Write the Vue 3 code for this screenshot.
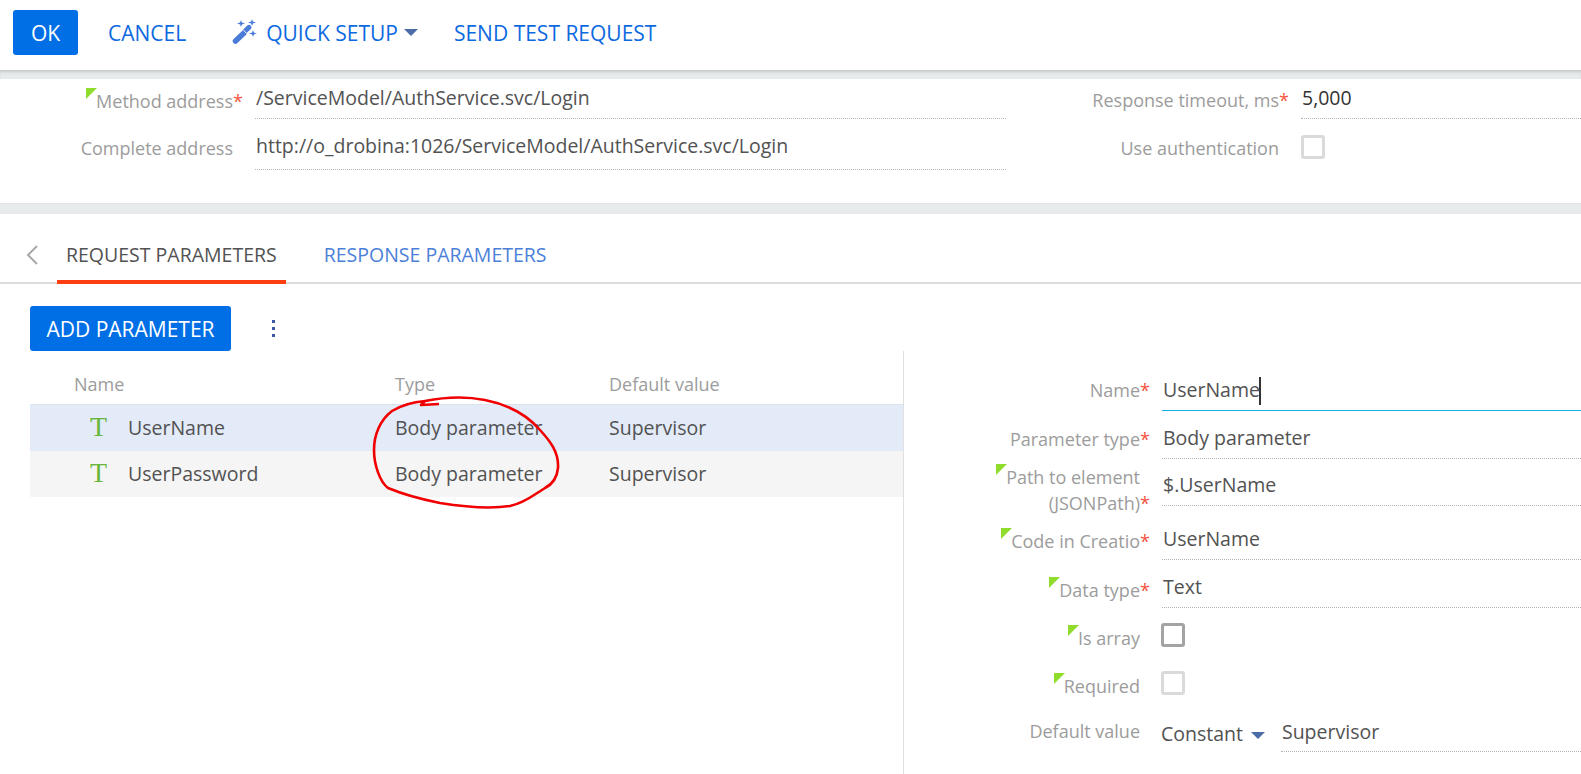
<script setup>
const topLeft = [
  { label: 'Method address', req: true, mark: true, value: '/ServiceModel/AuthService.svc/Login', cls: 'first' },
  { label: 'Complete address', value: 'http://o_drobina:1026/ServiceModel/AuthService.svc/Login', cls: 'second' }
]
const rows = [
  { name: 'UserName', type: 'Body parameter', def: 'Supervisor', active: true },
  { name: 'UserPassword', type: 'Body parameter', def: 'Supervisor' }
]
</script>

<template>
  <div class="page">
    <header class="toolbar">
      <button class="btn ok">OK</button>
      <span class="link cancel">CANCEL</span>
      <svg class="wand" width="26" height="26" viewBox="0 0 26 26">
        <path d="M3.5 22 L12 14" stroke="#4a7bd8" stroke-width="5.5" stroke-linecap="round" fill="none" />
        <path d="M13.4 11.8 L17 8.4" stroke="#4a7bd8" stroke-width="5" stroke-linecap="round" fill="none" />
        <path d="M11.6 11.2 L14.8 14.6" stroke="#fff" stroke-width="1" />
        <path d="M9 1 L9.9 3.6 L13 4.5 L9.9 5.4 L9 8 L8.1 5.4 L5 4.5 L8.1 3.6Z M20 0 L20.9 2.6 L24 3.5 L20.9 4.4 L20 7 L19.1 4.4 L16 3.5 L19.1 2.6Z M21 11 L21.9 13.6 L25 14.5 L21.9 15.4 L21 18 L20.1 15.4 L17 14.5 L20.1 13.6Z" fill="#4a7bd8" />
      </svg>
      <span class="link quick">QUICK SETUP</span>
      <span class="caret top-caret"></span>
      <span class="link send">SEND TEST REQUEST</span>
    </header>
    <div class="band shadow"></div>

    <section class="top">
      <div class="top-col left">
        <div v-for="f in topLeft" :key="f.label" class="top-row" :class="f.cls">
          <label class="lbl"><i v-if="f.mark" class="mark"></i>{{ f.label }}<b class="star">{{ f.req ? '*' : '' }}</b></label>
          <div class="val">{{ f.value }}</div>
        </div>
      </div>
      <div class="top-col right">
        <div class="top-row first">
          <label class="lbl">Response timeout, ms<b class="star">*</b></label>
          <div class="val dark">5,000</div>
        </div>
        <div class="top-row second">
          <label class="lbl">Use authentication<b class="star"></b></label>
          <div class="check-wrap"><span class="check light"></span></div>
        </div>
      </div>
    </section>
    <div class="band thin"></div>

    <nav class="tabs">
      <svg class="back" width="14" height="22" viewBox="0 0 14 22"><path d="M12 2 L3 11 L12 20" fill="none" stroke="#a9a9a9" stroke-width="2" /></svg>
      <div class="tab active">REQUEST PARAMETERS</div>
      <div class="tab other">RESPONSE PARAMETERS</div>
    </nav>

    <div class="actions">
      <button class="btn add">ADD PARAMETER</button>
      <span class="dots"><i></i><i></i><i></i></span>
    </div>

    <div class="split">
      <div class="list">
        <div class="thead">
          <span class="c1">Name</span><span class="c2">Type</span><span class="c3">Default value</span>
        </div>
        <div v-for="r in rows" :key="r.name" class="row" :class="{ active: r.active }">
          <span class="t-icon">T</span>
          <span class="c1b">{{ r.name }}</span><span class="c2">{{ r.type }}</span><span class="c3">{{ r.def }}</span>
        </div>
      </div>

      <div class="form">
        <div class="f-row">
          <label class="lbl p6">Name<b class="star">*</b></label>
          <div class="val focus">UserName<i class="cursor"></i></div>
        </div>
        <div class="f-row">
          <label class="lbl p8">Parameter type<b class="star">*</b></label>
          <div class="val">Body parameter</div>
        </div>
        <div class="f-row path">
          <label class="lbl two p15"><span><i class="mark"></i>Path to element<b class="star"></b></span><span>(JSONPath)<b class="star">*</b></span></label>
          <div class="val">$.UserName</div>
        </div>
        <div class="f-row code">
          <label class="lbl p14"><i class="mark"></i>Code in Creatio<b class="star">*</b></label>
          <div class="val">UserName</div>
        </div>
        <div class="f-row">
          <label class="lbl p10"><i class="mark"></i>Data type<b class="star">*</b></label>
          <div class="val">Text</div>
        </div>
        <div class="f-row">
          <label class="lbl p10"><i class="mark"></i>Is array<b class="star"></b></label>
          <div class="check-wrap"><span class="check strong"></span></div>
        </div>
        <div class="f-row">
          <label class="lbl p10"><i class="mark"></i>Required<b class="star"></b></label>
          <div class="check-wrap"><span class="check light"></span></div>
        </div>
        <div class="f-row">
          <label class="lbl p6">Default value<b class="star"></b></label>
          <div class="def">
            <span class="const">Constant</span><span class="caret def-caret"></span>
            <div class="val sup">Supervisor</div>
          </div>
        </div>
      </div>
    </div>

    <svg class="scribble" width="200" height="125" viewBox="370 392 200 125">
      <path d="M439 404 L421 405 L425 401 C445 397 465 396 485 400 C510 405 528 416 540 430 C550 441 559 452 558 468 C557 478 553 484 545 488 C535 494 525 503 510 506 C490 509 465 507 440 503 C420 499 400 493 388 488 C380 482 374 465 374 450 C374 435 380 420 392 411 C402 405 412 402 425 401" fill="none" stroke="#f00000" stroke-width="2.6" stroke-linejoin="round" />
    </svg>
  </div>
</template>

<style>
html, body { margin: 0; background: #fff; }
</style>

<style scoped>
.page { position: relative; width: 1581px; height: 774px; overflow: hidden; background: #fff; font-family: "Open Sans", sans-serif; font-size: 19.5px; color: #525252; }
.toolbar { height: 70px; display: flex; align-items: center; box-sizing: border-box; padding: 0 0 5px 13px; }
.btn { border: 0; background: #006fe6; color: #fff; border-radius: 3px; font: inherit; font-size: 21px; padding: 0; }
.ok { width: 65px; height: 45px; }
.link { color: #0d69e0; font-size: 21px; white-space: nowrap; }
.cancel { margin-left: 30px; }
.wand { margin-left: 46px; margin-top: -1px; }
.quick { margin-left: 8px; }
.send { margin-left: 36px; }
.caret { display: inline-block; flex: none; width: 0; height: 0; border-left: 7px solid transparent; border-right: 7px solid transparent; border-top: 7px solid #4a6da8; }
.top-caret { margin-left: 6px; }
.def-caret { margin-top: 6px; }
.band { background: #e8ebeb; }
.shadow { height: 9px; box-shadow: inset 0 3px 3px -1px #c4c8c8; }
.thin { height: 11px; border-top: 1px solid #e0e3e3; box-sizing: border-box; }
.top { height: 124px; box-sizing: border-box; display: flex; }
.top-col { display: flex; flex-direction: column; }
.left { width: 1006px; }
.right { flex: 1; }
.top-row { display: flex; height: 40px; margin-bottom: 11px; align-items: flex-end; }
.left .lbl { width: 233px; }
.lbl { position: relative; display: block; box-sizing: border-box; font-size: 18px; text-align: right; color: #9c9c9c; white-space: nowrap; flex: none; line-height: 24px; align-self: center; }
.first .lbl { padding-top: 2px; }
.second .lbl { padding-bottom: 4px; }
.star { display: inline-block; width: 10px; margin-right: -10px; color: #f6543e; font-weight: 400; text-align: left; }
.mark { display: inline-block; width: 0; height: 0; border-top: 11px solid #8fdc2d; border-right: 11px solid transparent; vertical-align: 9px; margin-right: -1px; }
.left .top-row .val { margin-left: 22px; flex: 1; }
.val { height: 40px; line-height: 38px; box-sizing: border-box; border-bottom: 1px dotted #b4b4b4; padding-left: 1px; white-space: nowrap; position: relative; }
.second .val { line-height: 32px; }
.right .lbl { width: 273px; }
.right .top-row .val { flex: 1; margin-left: 22px; }
.val.dark { color: #333; }
.check-wrap { margin-left: 22px; height: 40px; }
.check { display: block; width: 24px; height: 24px; box-sizing: border-box; border: 3px solid #dadada; border-radius: 3px; }
.second .check { margin-top: 5px; }
.f-row .check { margin-top: 7px; margin-left: -1px; }
.check.strong { border-color: #a3a3a3; }
.tabs { height: 70px; display: flex; align-items: stretch; border-bottom: 2px solid #dcdcdc; box-sizing: border-box; position: relative; }
.back { margin: 30px 0 0 25px; }
.tab { line-height: 82px; white-space: nowrap; padding: 0 9px; margin-bottom: -2px; box-sizing: border-box; height: 70px; }
.tab.active { margin-left: 18px; border-bottom: 4px solid #ff3f11; }
.tab.other { margin-left: 29px; color: #4b7fd8; }
.actions { height: 67px; display: flex; align-items: flex-start; padding: 22px 0 0 30px; box-sizing: border-box; }
.add { width: 201px; height: 45px; font-weight: 500; }
.dots { margin: 14px 0 0 41px; display: flex; flex-direction: column; gap: 4px; }
.dots i { width: 3px; height: 3px; background: #3d57a8; }
.split { display: flex; height: 423px; }
.list { width: 873px; margin-left: 30px; border-right: 1px solid #e0e0e0; }
.thead { display: flex; height: 54px; align-items: center; font-size: 18px; color: #9c9c9c; border-bottom: 1px solid #dde3ee; box-sizing: border-box; padding: 12px 0 0 45px; }
.thead .c1 { width: 320px; margin-left: -1px; padding-right: 1px; }
.c2 { width: 214px; flex: none; white-space: nowrap; }
.row { height: 46px; box-sizing: border-box; padding: 0 0 2px 60px; display: flex; align-items: center; background: #f5f5f5; }
.row.active { background: #e3eaf8; }
.t-icon { width: 38px; flex: none; color: #67b53a; font-family: "Liberation Serif", serif; font-size: 28px; }
.c1b { width: 267px; flex: none; }
.form { flex: 1; display: flex; flex-direction: column; padding-top: 12px; }
.f-row { display: flex; height: 48px; align-items: flex-end; flex: none; }
.f-row .lbl { width: 236px; align-self: center; }
.p6 { padding-top: 6px; }
.p8 { padding-top: 8px; }
.p10 { padding-top: 10px; }
.p14 { padding-top: 14px; }
.p15 { padding-top: 15px; }
.f-row .val { flex: 1; margin-left: 22px; }
.f-row .check-wrap { height: 40px; }
.val.focus { border-bottom: 1px solid #19b0ee; }
.cursor { display: inline-block; width: 2px; height: 28px; background: #333; vertical-align: -8px; margin-left: -1px; }
.path { height: 47px; }
.code { height: 54px; }
.two { line-height: 26px; }
.two span { display: block; }
.def { display: flex; flex: 1; margin-left: 21px; align-items: center; height: 40px; }
.const { margin: 3px 8px 0 0; }
.f-row .def .val { margin-left: 16px; line-height: 40px; }
.scribble { position: absolute; left: 370px; top: 392px; pointer-events: none; }
</style>
